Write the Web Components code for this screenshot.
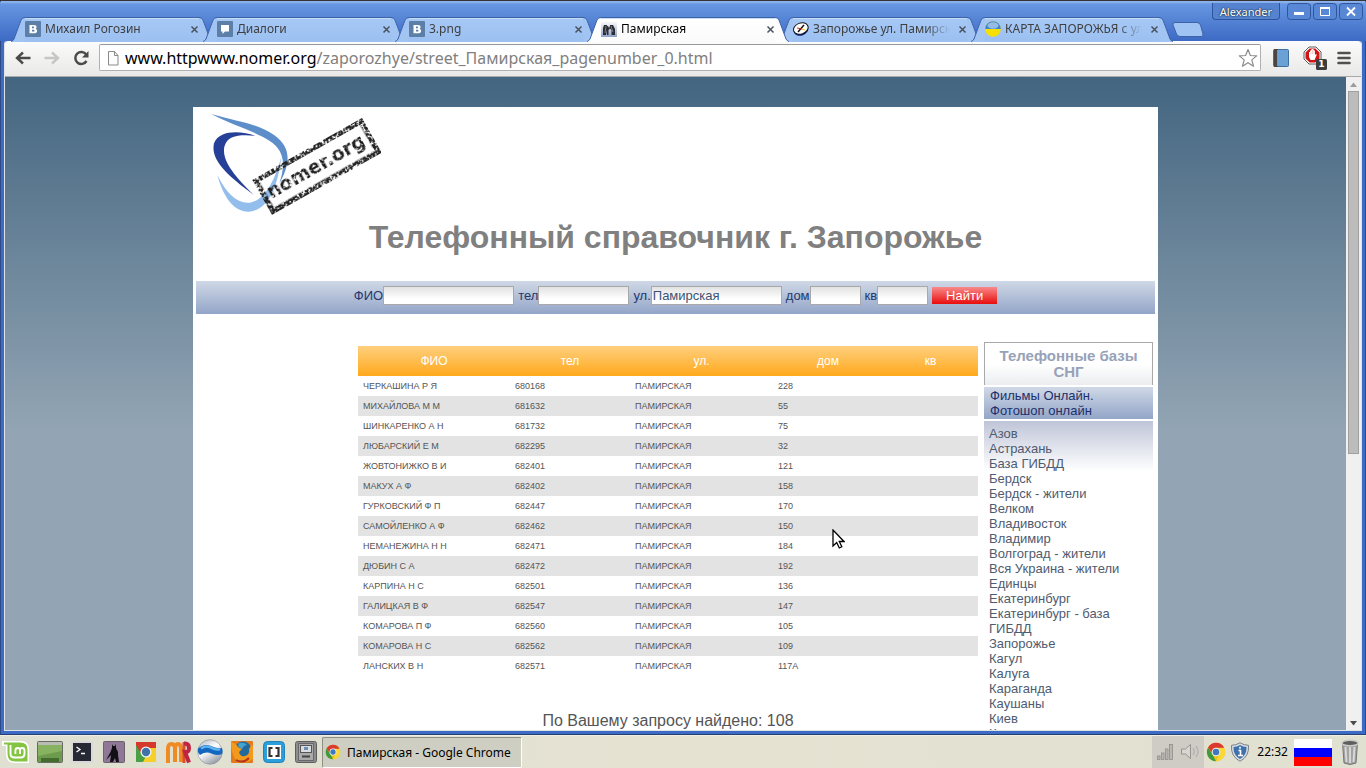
<!DOCTYPE html>
<html lang="ru">
<head>
<meta charset="utf-8">
<title>Памирская</title>
<style>
html, body { margin: 0; height: 100%; }
body { font-family: "Noto Sans", "Open Sans", sans-serif; font-size: 12px; background: #2b2b2b; overflow: hidden; }
</style>
</head>
<body>
<desktop-screen></desktop-screen>
<script>
const define = (name, html, setup) => {
  const template = document.createElement('template');
  template.innerHTML = '<style>*{box-sizing:border-box}</style>' + html;
  customElements.define(name, class extends HTMLElement {
    connectedCallback() {
      if (this.shadowRoot) return;
      const root = this.attachShadow({ mode: 'open' });
      root.append(template.content.cloneNode(true));
      if (setup) setup(root, this);
    }
  });
};

/* ---------- icons ---------- */
const CHROME = `
  <circle cx="12" cy="12" r="11" fill="#e8c11c"/>
  <path d="M2.5 6.5 8 15.5 12 23A11 11 0 0 1 2.5 6.5z" fill="#3d9b3f"/>
  <path d="M12 23 16.5 14.5 16 7H21.8A11 11 0 0 1 12 23z" fill="#fbd835"/>
  <path d="M12 7H21.8A11 11 0 0 0 2.5 6.5L7.6 14z" fill="#dc3a30"/>
  <circle cx="12" cy="12" r="5.2" fill="#f4f4f4"/><circle cx="12" cy="12" r="4" fill="#3f78bd"/>`;
const ICONS = {
  vk: [16, 16, `<rect width="16" height="16" rx="1" fill="#5b7fa6"/><path fill-rule="evenodd" fill="#fff" d="M4.5 4h4.2c2 0 2.9.8 2.9 2 0 .9-.4 1.400-1.200 1.800 1.100.3 1.700 1 1.700 2.100 0 1.500-1.200 2.300-3.200 2.300H4.500zM7 5.600v1.600h1c.8 0 1.100-.3 1.100-.8s-.3-.8-1.100-.8zM7 8.700v1.900h1.200c.9 0 1.300-.3 1.300-.9s-.4-1-1.300-1z"/>`],
  chat: [16, 16, `<rect width="16" height="16" rx="1" fill="#5b7fa6"/><path d="M4 4h8v6.500H8L5.500 13v-2.500H4z" fill="#fff"/>`],
  bino: [16, 16, `<defs><linearGradient id="g" x2="0" y2="1"><stop offset="0" stop-color="#fff"/><stop offset="1" stop-color="#8f9fc8"/></linearGradient></defs><rect width="16" height="16" fill="url(#g)"/><path d="M3 4h3v1h1l1 2 1-2V4h3l2 4v6h-3.500V9L9 7.500 7.500 9v5H6V9L5 14H2V7z" fill="#2b2c31"/><path d="M5 5 4 12M10 5l2 6" stroke="#777c88" stroke-width="1"/>`],
  compass: [16, 16, `<ellipse cx="8" cy="9" rx="7.500" ry="5.500" fill="#0a1f80" transform="rotate(-20 8 9)"/><ellipse cx="8" cy="7.500" rx="7.500" ry="5.500" fill="#fff" stroke="#111" transform="rotate(-20 8 8)"/><path d="M5 11 11 4" stroke="#111" stroke-width="1.500"/><path d="M4 7 9 8" stroke="#d22"/><path d="M9 8 12 9" stroke="#f4c20d"/>`],
  ua: [16, 16, `<circle cx="8" cy="8" r="7.800" fill="#f7df00"/><path d="M.2 8a7.800 7.800 0 0 1 15.600 0z" fill="#3f83cd"/><ellipse cx="8" cy="4.500" rx="5.500" ry="3.200" fill="#a9c9ea" opacity=".8"/>`],
  page: [12, 16, `<path d="M1.500 1.500h6l3.500 4v9.500h-9.500z" fill="#fcfcfc" stroke="#8a8a8a"/><path d="M7.500 1.500v4h3.500" fill="none" stroke="#8a8a8a"/>`],
  close: [9, 9, `<path d="M1.500 1.500 7.500 7.500M7.500 1.500 1.500 7.500" stroke="#4a5260" stroke-width="1.500"/>`],
  back: [16, 14, `<path d="M8 1.500 2 7l6 5.500M2 7h13.500" fill="none" stroke="#4b4b4b" stroke-width="2.400"/>`],
  forward: [16, 14, `<path d="M8 1.500 14 7 8 12.500M14 7H.5" fill="none" stroke="#c6c6c6" stroke-width="2.400"/>`],
  reload: [16, 16, `<path d="M13.200 4.500A6 6 0 1 0 13.500 11" fill="none" stroke="#4b4b4b" stroke-width="2.500"/><path d="M15.500 1v6.500H9z" fill="#4b4b4b"/>`],
  star: [20, 20, `<path d="m10 1.500 2.400 6 6.300.4-4.900 4 1.700 6.300-5.500-3.500-5.500 3.500 1.700-6.300-4.900-4 6.300-.4z" fill="#fff" stroke="#8c8c8c" stroke-width="1.200" stroke-linejoin="round"/>`],
  book: [16, 18, `<rect x=".5" y=".5" width="15" height="17" rx="1" fill="#6aa2d6" stroke="#3f6f9f"/><path d="M1 0h4v18H1z" fill="#4d4640"/><path d="M4.500 1v16" stroke="#9b8f85"/>`],
  stop: [24, 24, `<path d="M6 1h7l5 5v7l-5 5H6l-5-5V6z" fill="#fff" stroke="#5c5c5c"/><path d="M6.600 2.500h5.800l4.100 4.100v5.800l-4.100 4.100H6.600L2.500 12.400V6.600z" fill="#d21414"/><path d="M7 4.500h1v-1h1v-.5h1v.5h1v1h1V9l1-1 .8.800L11.500 14h-4L6 11V6h1z" fill="#fff"/><path d="M8 4.500V8M9.500 4v4M11 4.500V8" stroke="#d88" stroke-width=".4"/><rect x="13" y="13" width="11" height="11" rx="1.500" fill="#3d3d3d"/>`],
  menu: [14, 14, `<path d="M1.500 2h11M1.500 7h11M1.500 12h11" stroke="#505050" stroke-width="2.600" stroke-linecap="round"/>`],
  min: [24, 17, `<rect x=".5" y=".5" width="23" height="16" rx="3" fill="#5888d5" stroke="#2f549b"/><rect x="7" y="9" width="10" height="3" fill="#fff"/>`],
  max: [24, 17, `<rect x=".5" y=".5" width="23" height="16" rx="3" fill="#5888d5" stroke="#2f549b"/><path d="M7.500 5v7.500h9V5z" fill="none" stroke="#fff"/><path d="M7 5h10" stroke="#fff" stroke-width="2"/>`],
  shut: [24, 17, `<rect x=".5" y=".5" width="23" height="16" rx="3" fill="#5888d5" stroke="#2f549b"/><path d="m8 4.500 8 8m0-8-8 8" stroke="#fff" stroke-width="1.800"/>`],
  chrome: [20, 20, `<svg viewBox="0 0 24 24" width="20" height="20">${CHROME}</svg>`],
  chromeSmall: [16, 16, `<svg viewBox="0 0 24 24" width="16" height="16">${CHROME}</svg>`],
  chromeSquare: [22, 22, `<rect x="1" y="1" width="20" height="20" rx="1" fill="#f6cf2b"/><path d="M1 1h20v6H11L7 13 1 7z" fill="#d5382c"/><path d="M1 4 7 14l4 1-3 6H1z" fill="#4ba046"/><circle cx="11" cy="11" r="5.500" fill="#f4f4f4"/><circle cx="11" cy="11" r="4.200" fill="#3f73a8"/>`],
  mint: [28, 24, `<path d="M0 1h19q8 0 8 8v14H13Q4 23 4 14V6H0z" fill="#fff"/><path d="M2 2.500h16q7.500 0 7.500 7v12H13q-7.500 0-7.500-8v-9H2z" fill="#83c441"/><path d="M8.500 5v8.500q0 4 4 4h6q4 0 4-4V10.500q0-2.500-2.300-2.500T18 10.500v3.500M18 10.500Q18 8 15.700 8t-2.300 2.500V14" fill="none" stroke="#fff" stroke-width="1.900"/>`],
  desk: [26, 22, `<rect x=".5" y=".5" width="25" height="21" rx="1" fill="#6d9b4d" stroke="#676b62"/><rect x="1" y="1" width="24" height="3" fill="#b9bbb5"/><path d="M1 4h24v6L1 15z" fill="#87b25f"/><rect x="4" y="17" width="18" height="4" fill="#436b2d"/>`],
  term: [22, 22, `<rect x="1" y="1" width="20" height="20" rx="1" fill="#262833" stroke="#d8d8d8" stroke-width="2"/><path d="m5.500 6 3.500 2.500L5.500 11M10 12.500h4" fill="none" stroke="#fff" stroke-width="1.300"/>`],
  knight: [22, 22, `<rect x=".5" y=".5" width="21" height="21" rx="1" fill="#8f7896" stroke="#6d6170"/><path d="m9 3 1 2h2l1-2v4l2 4v3l1 7h-3l-1-4-2 4H7l1-7-5 5 4.500-8L9 7z" fill="#121014"/>`],
  mr: [26, 24, `<path d="M3 23V9q0-5 3.500-5T10 9v13M10 10q0-6 3-6t3 5v13" fill="none" stroke="#f08a24" stroke-width="4"/><path d="M19 2v21" stroke="#d9502b" stroke-width="3"/><path d="M19 3.500h1q4 0 4 4.500t-4 4l4 10.500" fill="none" stroke="#bf2440" stroke-width="4"/>`],
  globe: [26, 26, `<defs><linearGradient id="w" x2=".6" y2="1"><stop offset="0" stop-color="#aab0b8"/><stop offset=".5" stop-color="#fff"/><stop offset="1" stop-color="#9a9fa8"/></linearGradient></defs><circle cx="13" cy="13" r="12.300" fill="url(#w)" stroke="#868c95" stroke-width=".6"/><path d="M1 9.500Q7 4 14 7t11 2q1 3 .2 6-6 2-11-.5T3 16Q0 13 1 9.500z" fill="#1467bf"/><path d="M4 9.500q5-3.500 10-.8t9 1.500" stroke="#5fb1ef" stroke-width="2.500" fill="none"/>`],
  fox: [22, 22, `<rect width="22" height="22" rx="1" fill="#e27b1c"/><circle cx="12" cy="9" r="8.500" fill="#226a9c"/><path d="M0 1q5 1 7 5l4 2-3 3q1 5 6 4 5-1 4-7l3-5 1 3v12q-8 6-16 2Q0 14 0 1z" fill="#f39a1c"/><path d="M8 2q6-1 8 2l-3 1-2 3-4-3z" fill="#45a3cf"/><path d="M5 19q7 4 13-2" stroke="#b43518" stroke-width="2" fill="none"/>`],
  brackets: [22, 22, `<rect x=".5" y=".5" width="21" height="21" rx="4" fill="#2b9fdb" stroke="#2082bb"/><rect x="4" y="4" width="14" height="14" fill="#fff"/><path d="M9.500 7H6.500v8h3M12.500 7h3v8h-3" fill="none" stroke="#333" stroke-width="2.200"/>`],
  cabinet: [22, 22, `<rect x=".5" y=".5" width="21" height="21" rx="2" fill="#8e8e8e" stroke="#5d5d5d"/><rect x="3.500" y="2.500" width="15" height="17" fill="#aaa" stroke="#686868"/><rect x="5.500" y="4.500" width="11" height="7" fill="#d9dde2" stroke="#555"/><rect x="9" y="6" width="4" height="3" fill="#6b8fb3"/><path d="M7 15.500h8" stroke="#444" stroke-width="2"/>`],
  signal: [20, 18, `<g fill="#b9b7b3" stroke="#8f8d89" stroke-width=".8"><rect x="1.500" y="13" width="2.500" height="3.500"/><rect x="5.500" y="10" width="2.500" height="6.500"/><rect x="9.500" y="6" width="2.500" height="10.500"/><rect x="13.500" y="1.500" width="3" height="15"/></g>`],
  sound: [20, 18, `<path d="M1.500 6h4l5-4.500v14L5.500 11h-4z" fill="#d8d6d2" stroke="#96948f"/><path d="M13 5q2.500 3.500 0 7M16 3q4 5.500 0 11" fill="none" stroke="#b3b1ac" stroke-width="1.300"/>`],
  shield: [20, 20, `<path d="M10 .8q4 2.500 8.500 2.500 1 11-8.500 16Q.500 14.300 1.500 3.300 6 3.300 10 .8z" fill="#d8dde2" stroke="#7b8189"/><path d="M10 3q3 1.800 6.500 2 .500 8-6.500 12Q3 13 3.500 5 7 4.800 10 3z" fill="#3e71ab"/><path d="M8.500 8.500h2v5M8 13.500h5M10 4.800v1.900" stroke="#fff" stroke-width="1.600" fill="none"/>`],
  flag: [38, 27, `<path fill="#fff" d="M0 0h38v9H0z"/><path fill="#00f" d="M0 9h38v9H0z"/><path fill="#f00" d="M0 18h38v9H0z"/>`],
  trash: [18, 26, `<path d="M1.500 4 3 24q6 3 12 0l1.500-20z" fill="#a3a3a3" stroke="#777"/><ellipse cx="9" cy="4" rx="8" ry="2.800" fill="#5e5e5e" stroke="#c9c9c9" stroke-width="1.400"/><path d="m4.500 8 1 15M9 8v16M13.500 8l-1 15" stroke="#dadada" stroke-width="1.800"/>`],
  up: [15, 14, `<path d="M4 10 7.500 5.500 11 10z" fill="#9c9c9c"/>`],
  down: [15, 14, `<path d="M4 5h7L7.500 9.500z" fill="#4b4b4b"/>`],
  cursor: [13, 22, `<path d="M1 1v16l3.700-3.500L7.300 19l2.500-1.200L7.300 12.500h4.700z" fill="#fff" stroke="#000" stroke-width="1.300"/>`]
};
define('ui-icon', `<style>:host{display:block;flex:none} svg{display:block}</style>`, (root, host) => {
  const [w, h, body] = ICONS[host.getAttribute('name')];
  const holder = document.createElement('template');
  holder.innerHTML = `<svg width="${w}" height="${h}" viewBox="0 0 ${w} ${h}" aria-hidden="true">${body}</svg>`;
  root.append(holder.content);
});

/* ---------- browser chrome ---------- */
define('browser-tab', `
<style>
:host{display:flex;position:relative;flex:0 1 192px;min-width:0;height:24px;color:#3f3f3f}
:host([active]){z-index:2;color:#000}
.shape{position:absolute;left:0;top:0;width:calc(100% + 10px);height:25px;display:flex}
.shape svg{flex:none;display:block}
.mid{flex:1;border-top:1px solid #3c62a8;background:var(--face);box-shadow:inset 0 1px #c4dcf8}
:host{--face:linear-gradient(#a6c8f5,#9bc0f1);--edge:#a1c4f3}
:host([active]){--face:linear-gradient(#fff,#fafafa);--edge:#fdfdfd}
.edge{fill:var(--edge)}
.row{position:relative;display:flex;align-items:center;flex:1;min-width:0;padding:0 0 0 14px;gap:4px}
.title{flex:1;min-width:0;white-space:nowrap;overflow:hidden;line-height:22px;
  -webkit-mask-image:linear-gradient(90deg,#000 calc(100% - 24px),transparent)}
button{border:0;background:none;padding:4px;margin:0}
</style>
<div class="shape"><svg width="14" height="25"><path class="edge" d="M0 24.500Q2 24 3 22L10 3Q11 .5 14 .5V25H0z"/><path d="M0 24.500Q2 24 3 22L10 3Q11 .5 14 .5" fill="none" stroke="#3c62a8"/></svg><div class="mid"></div><svg width="14" height="25"><path class="edge" d="M0 .5Q3 .5 4 3L11 22Q12 24 14 24.500V25H0z"/><path d="M0 .5Q3 .5 4 3L11 22Q12 24 14 24.500" fill="none" stroke="#3c62a8"/></svg></div>
<div class="row"><span class="title"><slot></slot></span><button type="button" aria-label="Закрыть вкладку"><ui-icon name="close"></ui-icon></button></div>`,
(root, host) => {
  const icon = document.createElement('ui-icon');
  icon.setAttribute('name', host.getAttribute('icon'));
  root.querySelector('.row').prepend(icon);
});

define('title-bar', `
<style>
:host{display:flex;height:41px;padding:0 3px 0 11px;background:linear-gradient(#333 0 1px,#8fb4ec 1px 2px,#6797e2 4px,#3d6ac4);border-radius:4px 4px 0 0}
.tabs{display:flex;flex:1;min-width:0;padding-top:17px}
.new{flex:none;margin:5px 0 0 9px;padding:0;border:0;background:none;width:32px;height:15px}
.new svg{display:block}
.win{display:flex;gap:2px;padding-top:3px;align-items:flex-start}
.win button{border:0;padding:0;background:none}
.win .user{margin-right:5px;height:17px;padding:0 7px;border:1px solid #2f549b;border-top:0;border-radius:0 0 4px 4px;background:#5583d0;color:#fff;font:11px/15px "Noto Sans",sans-serif;text-shadow:0 0 1px #123,0 0 2px #123}
</style>
<div class="tabs">
<browser-tab icon="vk">Михаил Рогозин</browser-tab><browser-tab icon="chat">Диалоги</browser-tab><browser-tab icon="vk">3.png</browser-tab><browser-tab icon="bino" active>Памирская</browser-tab><browser-tab icon="compass">Запорожье ул. Памирская</browser-tab><browser-tab icon="ua">КАРТА ЗАПОРОЖЬЯ с улицами</browser-tab>
<button class="new" type="button" aria-label="Новая вкладка"><svg width="32" height="15"><path d="M3 .5h22q2.500 0 3.500 2.500l2.500 9q.500 2.500-2 2.500H8q-2.500 0-3.500-2.500L1 3Q.500.500 3 .5z" fill="#9fc4f3" stroke="#3c62a8"/></svg></button>
</div>
<div class="win"><button class="user" type="button">Alexander</button><button type="button" aria-label="Свернуть"><ui-icon name="min"></ui-icon></button><button type="button" aria-label="Развернуть"><ui-icon name="max"></ui-icon></button><button type="button" aria-label="Закрыть"><ui-icon name="shut"></ui-icon></button></div>`);

define('tool-bar', `
<style>
:host{display:flex;align-items:center;height:36px;padding:0 7px 2px 10px;background:linear-gradient(#fbfbfb,#e9e9e8);border-bottom:1px solid #a9aaa8;border-radius:3px 3px 0 0}
button{border:0;background:none;padding:0;display:block}
nav{display:flex;gap:13px;align-items:center;margin-right:10px}
.address{display:flex;align-items:center;flex:1;min-width:0;height:27px;border:1px solid #b0b0b0;border-top-color:#999;border-radius:2px;background:#fff;padding:0 2px 0 7px;gap:6px}
.url{flex:1;min-width:0;font-size:16px;line-height:24px;white-space:nowrap;color:#808080;outline:0;overflow:hidden}
.url b{font-weight:400;color:#000}
.ext{display:flex;align-items:center;gap:14px;margin-left:12px}
.blocker{position:relative}
.badge{position:absolute;left:13px;top:13px;width:11px;color:#fff;font:bold 9px/11px "DejaVu Sans",sans-serif;text-align:center}
.ext .menu{margin:0 3px 0 -4px}
</style>
<nav><button type="button" aria-label="Назад"><ui-icon name="back"></ui-icon></button><button type="button" aria-label="Вперёд"><ui-icon name="forward"></ui-icon></button><button type="button" aria-label="Обновить"><ui-icon name="reload"></ui-icon></button></nav>
<div class="address"><ui-icon name="page"></ui-icon><div class="url" role="textbox" contenteditable="true" spellcheck="false" aria-label="Адрес"><b>www.httpwww.nomer.org</b>/zaporozhye/street_Памирская_pagenumber_0.html</div><button type="button" aria-label="В закладки"><ui-icon name="star"></ui-icon></button></div>
<div class="ext"><button type="button" aria-label="Словарь"><ui-icon name="book"></ui-icon></button><button class="blocker" type="button" aria-label="Блокировщик"><ui-icon name="stop"></ui-icon><span class="badge">1</span></button><button class="menu" type="button" aria-label="Меню"><ui-icon name="menu"></ui-icon></button></div>`);

define('scroll-bar', `
<style>
:host{display:flex;flex-direction:column;flex:none;width:15px;background:#f0f0f0}
.track{flex:1;min-height:0;padding:0 2px}
.thumb{height:58%;width:11px;background:#bcbcbc;border:1px solid #a0a0a0}
</style>
<ui-icon name="up"></ui-icon><div class="track"><div class="thumb"></div></div><ui-icon name="down"></ui-icon>`);

/* ---------- site ---------- */
define('site-logo', `
<style>:host{display:block} a,svg{display:block} a{width:170px}</style>
<a href="#" aria-label="nomer.org"><svg width="170" height="104" viewBox="63 39 510 312">
<defs><filter id="grunge" x="-5%" y="-5%" width="110%" height="110%"><feTurbulence type="fractalNoise" baseFrequency=".14" numOctaves="2" seed="4"/><feColorMatrix values="0 0 0 0 0 0 0 0 0 0 0 0 0 0 0 6 0 0 0 -2.100"/><feComposite in="SourceGraphic" operator="in"/></filter>
<filter id="wear" x="-5%" y="-20%" width="110%" height="140%"><feTurbulence type="fractalNoise" baseFrequency=".12" numOctaves="2" seed="9"/><feColorMatrix values="0 0 0 0 0 0 0 0 0 0 0 0 0 0 0 6 0 0 0 -1.700"/><feComposite in="SourceGraphic" operator="in"/></filter></defs>
<path d="M63 42C150 66 205 72 252 105 305 142 302 190 268 250 288 190 282 150 238 122 190 92 120 72 63 42z" fill="#5d8ec9"/>
<path d="M82 226C100 290 130 335 175 335 232 331 262 270 274 170 255 240 225 300 180 308 140 312 110 280 82 226z" fill="#93bdea"/>
<path d="M196 107C150 92 88 90 72 130 62 175 100 218 192 285 130 225 95 180 103 140 112 105 150 103 196 107z" fill="#263f97"/>
<g transform="translate(187 240) rotate(-29.500)"><g filter="url(#grunge)"><rect x="8" y="7" width="362" height="105" fill="none" stroke="#222" stroke-width="16"/></g>
<text x="22" y="78" font-family="DejaVu Sans" font-weight="bold" font-size="57" fill="#1c1c1c" filter="url(#wear)">nomer.org</text></g>
</svg></a>`);

define('search-bar', `
<style>
:host{display:block;background:linear-gradient(#cfd8e6,#93a5c8);color:#25386f}
form{display:flex;flex-wrap:wrap;justify-content:center;align-items:center;gap:4px;margin:0;padding:5px 0 9px}
label{display:flex;align-items:center;font-size:13px;line-height:19px;white-space:nowrap}
input{width:131px;height:19px;margin:0;padding:0 1px;border:1px solid #a9a9a9;border-radius:0;background:linear-gradient(#e2e2e2,#fff 70%);font:13px "Liberation Sans",Arial,sans-serif;color:#3c5374;outline:0}
.phone{width:91px}.short{width:51px}
button{width:65px;height:17px;border:0;padding:0;background:linear-gradient(#f98a8a,#e80c0c);color:#fff;font:13px/17px "Liberation Sans",Arial,sans-serif}
</style>
<form onsubmit="return false"><label>ФИО<input name="fio"></label><label>тел<input class="phone" name="tel"></label><label>ул.<input name="street" value="Памирская"></label><label>дом<input class="short" name="house"></label><label>кв<input class="short" name="flat"></label><button type="submit">Найти</button></form>`);

const PEOPLE = [['ЧЕРКАШИНА Р Я','680168','228'],['МИХАЙЛОВА М М','681632','55'],['ШИНКАРЕНКО А Н','681732','75'],['ЛЮБАРСКИЙ Е М','682295','32'],['ЖОВТОНИЖКО В И','682401','121'],['МАКУХ А Ф','682402','158'],['ГУРКОВСКИЙ Ф П','682447','170'],['САМОЙЛЕНКО А Ф','682462','150'],['НЕМАНЕЖИНА Н Н','682471','184'],['ДЮБИН С А','682472','192'],['КАРПИНА Н С','682501','136'],['ГАЛИЦКАЯ В Ф','682547','147'],['КОМАРОВА П Ф','682560','105'],['КОМАРОВА Н С','682562','109'],['ЛАНСКИХ В Н','682571','117А']];
define('subscriber-table', `
<style>
:host{display:block}
table{width:100%;border-collapse:collapse;table-layout:fixed}
.name{width:152px}.tel{width:120px}.street{width:143px}.house{width:110px}
thead{background:linear-gradient(#ffcf7e,#ffa91c)}
th{height:30px;padding:0;font-size:12px;font-weight:400;color:#fff}
td{height:20px;padding:0 5px;font-size:9px;line-height:12px;color:#555}
tbody tr:nth-child(even){background:#e3e3e3}
</style>
<table><colgroup><col class="name"><col class="tel"><col class="street"><col class="house"><col></colgroup>
<thead><tr><th>ФИО</th><th>тел</th><th>ул.</th><th>дом</th><th>кв</th></tr></thead><tbody></tbody></table>`,
root => {
  root.querySelector('tbody').innerHTML = PEOPLE.map(([n, t, h]) => `<tr><td>${n}</td><td>${t}</td><td>ПАМИРСКАЯ</td><td>${h}</td><td></td></tr>`).join('');
});

const CITIES = ['Азов','Астрахань','База ГИБДД','Бердск','Бердск - жители','Велком','Владивосток','Владимир','Волгоград - жители','Вся Украина - жители','Единцы','Екатеринбург','Екатеринбург - база ГИБДД','Запорожье','Кагул','Калуга','Караганда','Каушаны','Киев','Киров'];
define('city-list', `
<style>
:host{display:flex;flex-direction:column;gap:2px;font-size:13px;line-height:15px}
h2{margin:0;height:43px;padding:5px 8px 0;border:1px solid #a9a9a9;border-bottom:0;background:linear-gradient(#fff 50%,#ebedf0);color:#97a2b8;font-size:15px;line-height:16px;text-align:center}
.ads{padding:1px 6px;background:linear-gradient(#cfd8e6,#93a5c8)}
.cities{padding:5px;background:linear-gradient(#bfc5d8,#fff) 0 0/100% 50px no-repeat}
a{display:block;text-decoration:none;color:#4f5b70}
.ads a{color:#1c2f6b}
</style>
<h2>Телефонные базы СНГ</h2>
<div class="ads"><a href="#">Фильмы Онлайн.</a><a href="#">Фотошоп онлайн</a></div>
<nav class="cities"></nav>`,
root => { root.querySelector('nav').innerHTML = CITIES.map(c => `<a href="#">${c}</a>`).join(''); });

define('directory-page', `
<style>
:host{display:block;flex:1;min-width:0;overflow:hidden;padding-top:30px;font-family:"Liberation Sans",Arial,sans-serif;background:linear-gradient(#436580,#93a5b4 355px)}
.sheet{max-width:965px;margin:0 auto;padding:6px 3px 0;background:#fff}
site-logo{margin-left:15px}
h1{margin:2px 0 25px;font-size:32px;line-height:37px;text-align:center;color:#808080}
main{display:grid;grid-template-columns:1fr minmax(0,620px) 169px;gap:6px;padding:28px 2px 0 0}
.results{grid-column:2;padding-top:4px}
p{margin:36px 0;font-size:16px;line-height:18px;text-align:center;color:#555}
</style>
<div class="sheet"><site-logo></site-logo><h1>Телефонный справочник г. Запорожье</h1><search-bar></search-bar>
<main><section class="results"><subscriber-table></subscriber-table><p>По Вашему запросу найдено: 108</p></section><city-list></city-list></main></div>`);

define('browser-window', `
<style>
:host{display:flex;flex-direction:column;min-height:0;background:#3d6ac4;border-radius:4px 4px 0 0;border-bottom:1px solid #26406f;box-shadow:inset 1px 0 #2b4a86,inset -1px 0 #2b4a86}
.client{display:flex;flex-direction:column;flex:1;min-height:0;margin:0 4px 3px;border:solid #dfe3e6;border-width:0 1px 1px;border-radius:3px 3px 0 0}
.view{display:flex;flex:1;min-height:0}
</style>
<title-bar></title-bar><div class="client"><tool-bar></tool-bar><div class="view"><directory-page></directory-page><scroll-bar></scroll-bar></div></div>`);

/* ---------- panel ---------- */
define('task-bar', `
<style>
:host{display:flex;align-items:center;height:33px;padding:0 7px 0 2px;background:linear-gradient(90deg,#dfe0d1,#e5e2d2 50%,#e1e1d1);border-top:1px solid #f0efe6;color:#000}
button{border:0;background:none;padding:0}
.launch{display:flex}
.launch button{width:32px;height:30px;display:flex;align-items:center;justify-content:center}
.launch button:first-child{justify-content:flex-start}
.task{display:flex;align-items:center;gap:6px;width:200px;height:31px;padding:0 2px;background:#cfcec2;border:1px solid #8f8f84;border-right-color:#fff;border-bottom-color:#fff;border-radius:2px;font:12px "Noto Sans",sans-serif;white-space:nowrap}
.tray{display:flex;align-items:center;margin-left:auto}
.muted{display:flex;align-items:center;gap:4px;height:32px;width:52px;padding-left:4px;background:#cfccc6}
.clock{margin:0 6px 0 7px;line-height:16px}
.chrome{margin:0 4px 0 2px}.flag{margin-right:9px}
</style>
<div class="launch"></div>
<button class="task" type="button"><ui-icon name="chromeSmall"></ui-icon>Памирская - Google Chrome</button>
<div class="tray"><div class="muted"><ui-icon name="signal"></ui-icon><ui-icon name="sound"></ui-icon></div><ui-icon class="chrome" name="chrome"></ui-icon><ui-icon name="shield"></ui-icon><time class="clock">22:32</time><ui-icon class="flag" name="flag"></ui-icon><ui-icon name="trash"></ui-icon></div>`,
root => {
  root.querySelector('.launch').innerHTML = [['mint','Меню'],['desk','Рабочий стол'],['term','Терминал'],['knight','Игра'],['chromeSquare','Chrome'],['mr','Редактор'],['globe','Интернет'],['fox','Firefox'],['brackets','Brackets'],['cabinet','Файлы']]
    .map(([i, l]) => `<button type="button" aria-label="${l}"><ui-icon name="${i}"></ui-icon></button>`).join('');
});

define('desktop-screen', `
<style>
:host{display:flex;flex-direction:column;height:100vh;position:relative}
browser-window{flex:1}
task-bar{flex:none}
.pointer{position:absolute;left:832px;top:529px;pointer-events:none;z-index:5}
</style>
<browser-window></browser-window><task-bar></task-bar><ui-icon class="pointer" name="cursor"></ui-icon>`);
</script>
</body>
</html>
